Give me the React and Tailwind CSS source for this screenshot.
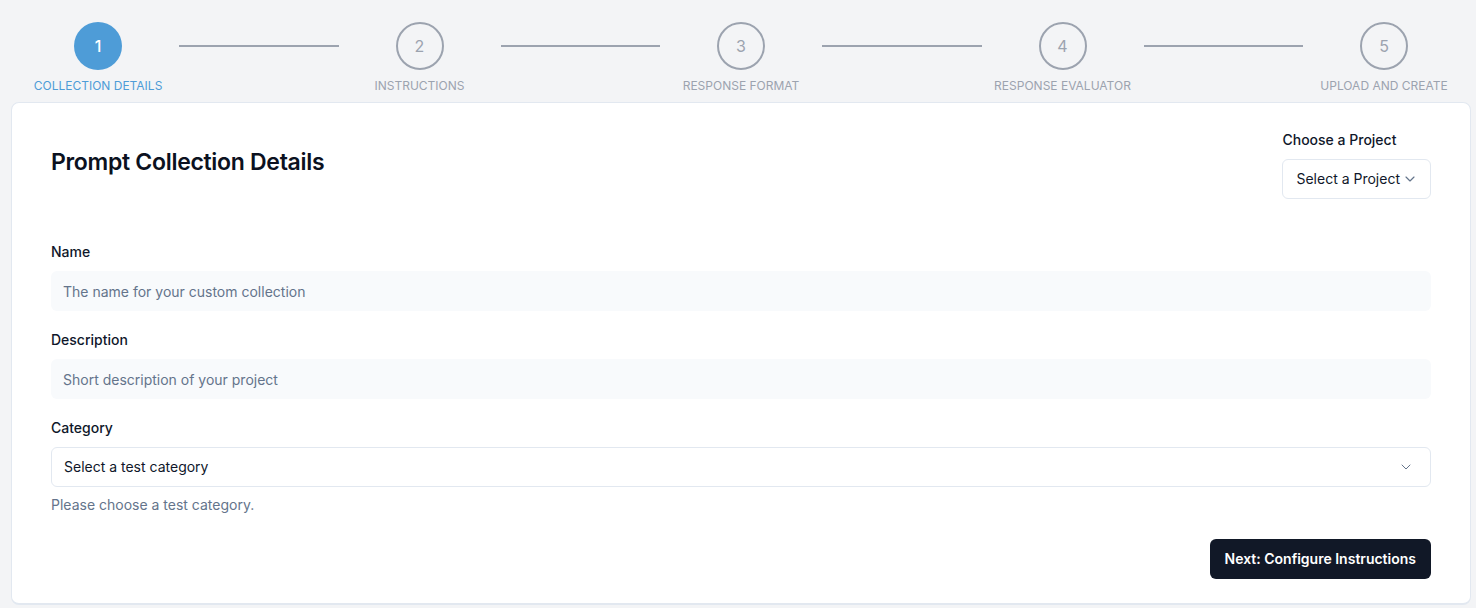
import React from "react";
import { ChevronDown } from "lucide-react";

const steps = [
  { n: 1, label: "Collection Details" },
  { n: 2, label: "Instructions" },
  { n: 3, label: "Response Format" },
  { n: 4, label: "Response Evaluator" },
  { n: 5, label: "Upload and Create" },
];

const Stepper = ({ current }) => (
  <div className="flex items-start pl-[34px] pr-[28px] pt-[22px] h-[102px]">
    {steps.map((s, i) => (
      <React.Fragment key={s.n}>
        <div className="w-32 flex flex-col items-center shrink-0">
          <div
            className={
              s.n === current
                ? "w-12 h-12 rounded-full bg-[#4e9cd7] text-white flex items-center justify-center text-base font-medium"
                : "w-12 h-12 rounded-full border-2 border-[#9ca3af] text-[#9ca3af] flex items-center justify-center text-base"
            }
          >
            {s.n}
          </div>
          <div
            className={
              "mt-2 text-xs uppercase whitespace-nowrap leading-4 " +
              (s.n === current ? "text-[#4e9cd7]" : "text-[#9ca3af]")
            }
          >
            {s.label}
          </div>
        </div>
        {i < steps.length - 1 && (
          <div className="flex-1 mx-[17px] h-0.5 bg-[#9ca3af] mt-[23px]" />
        )}
      </React.Fragment>
    ))}
  </div>
);

const Field = ({ label, placeholder }) => (
  <div>
    <label className="block text-sm font-medium text-[#0f172a] leading-5">{label}</label>
    <input
      type="text"
      placeholder={placeholder}
      className="mt-[9px] w-full h-10 rounded-md bg-[#f8fafc] px-3 text-sm text-[#0f172a] placeholder:text-[#64748b] outline-none"
    />
  </div>
);

export default function App() {
  return (
    <div
      className="min-h-[608px] bg-[#f3f4f6]"
      style={{ fontFamily: "Inter, 'Noto Sans', sans-serif" }}
    >
      <Stepper current={1} />
      <div className="ml-[11px] mr-[5px] bg-white rounded-lg border border-[#e2e8f0] border-b-2 px-[39px] pt-[27px] pb-6">
        <div className="flex items-center justify-between">
          <h2 className="mb-[5px] text-[23px] font-semibold text-[#0b1120] tracking-[-0.3px]">
            Prompt Collection Details
          </h2>
          <div className="flex flex-col">
            <span className="text-sm font-medium text-[#0f172a] leading-5">Choose a Project</span>
            <button className="mt-[9px] h-10 pl-[13px] pr-[12px] flex items-center gap-0.5 rounded-md border border-[#e2e8f0] text-sm text-[#0f172a]">
              Select a Project
              <ChevronDown className="w-4 h-4 text-[#64748b]" strokeWidth={1.75} />
            </button>
          </div>
        </div>

        <div className="mt-[43px] flex flex-col gap-[19px]">
          <Field label="Name" placeholder="The name for your custom collection" />
          <Field label="Description" placeholder="Short description of your project" />
          <div>
            <label className="block text-sm font-medium text-[#0f172a] leading-5">Category</label>
            <button className="mt-[9px] w-full h-10 rounded-md border border-[#e2e8f0] bg-white px-3 flex items-center justify-between text-sm text-[#0f172a]">
              Select a test category
              <ChevronDown className="w-4 h-4 text-[#64748b] mr-1" strokeWidth={1.5} />
            </button>
            <p className="mt-2 text-sm text-[#64748b] leading-5">Please choose a test category.</p>
          </div>
        </div>

        <div className="mt-6 flex justify-end">
          <button className="h-10 px-[15px] rounded-md bg-[#111827] text-white text-sm font-semibold">
            Next: Configure Instructions
          </button>
        </div>
      </div>
    </div>
  );
}
